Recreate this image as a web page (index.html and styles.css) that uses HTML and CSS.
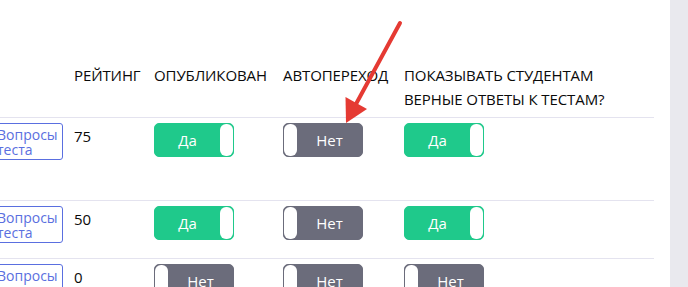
FILE: index.html
```
<!DOCTYPE html>
<html lang="ru">
<head>
<meta charset="utf-8">
<link rel="stylesheet" href="styles.css">
</head>
<body>
<div class="page">
  <main class="main">
    <div class="table">
      <div class="row head">
        <div class="cell"></div>
        <div class="cell">РЕЙТИНГ</div>
        <div class="cell">ОПУБЛИКОВАН</div>
        <div class="cell">АВТОПЕРЕХОД</div>
        <div class="cell">ПОКАЗЫВАТЬ СТУДЕНТАМ<br>ВЕРНЫЕ ОТВЕТЫ К ТЕСТАМ?</div>
      </div>
      <div class="row r1">
        <div class="cell"><button class="qbtn">Вопросы<br>теста</button></div>
        <div class="cell num">75</div>
        <div class="cell"><span class="tgl on">Да</span></div>
        <div class="cell"><span class="tgl off">Нет</span></div>
        <div class="cell"><span class="tgl on">Да</span></div>
      </div>
      <div class="row r2">
        <div class="cell"><button class="qbtn">Вопросы<br>теста</button></div>
        <div class="cell num">50</div>
        <div class="cell"><span class="tgl on">Да</span></div>
        <div class="cell"><span class="tgl off">Нет</span></div>
        <div class="cell"><span class="tgl on">Да</span></div>
      </div>
      <div class="row r3">
        <div class="cell"><button class="qbtn">Вопросы<br>теста</button></div>
        <div class="cell num">0</div>
        <div class="cell"><span class="tgl off">Нет</span></div>
        <div class="cell"><span class="tgl off">Нет</span></div>
        <div class="cell"><span class="tgl off">Нет</span></div>
      </div>
    </div>
    <svg class="arrow" width="688" height="287" viewBox="0 0 688 287">
      <line x1="400" y1="23" x2="356" y2="104" stroke="#e53a33" stroke-width="4" stroke-linecap="round"/>
      <polygon points="346,123 345.5,97 367,109" fill="#e53a33"/>
    </svg>
  </main>
  <aside class="side"></aside>
</div>
</body>
</html>
```
FILE: styles.css
```
html, body {
  margin: 0;
  padding: 0;
  background: #fff;
}
body {
  font-family: "Open Sans", "Noto Sans", sans-serif;
  color: #0a0a0a;
  width: 688px;
  height: 287px;
  overflow: hidden;
}
.page {
  display: flex;
  height: 287px;
}
.main {
  position: relative;
  width: 670px;
  overflow: hidden;
}
.side {
  flex: 1;
  background: #e9e9ee;
}
.table {
  margin-left: -10px;
  width: 664px;
}
.row {
  display: grid;
  grid-template-columns: 84px 80px 129px 121px 250px;
  box-sizing: border-box;
}
.row.head {
  height: 117px;
  padding-top: 63px;
  font-size: 15px;
  line-height: 24px;
  letter-spacing: -0.1px;
}
.row.r1, .row.r2, .row.r3 {
  border-top: 1px solid #e4e3ef;
  padding-top: 5px;
}
.row.r1 { height: 83px; }
.row.r2 { height: 58px; }
.row.r3 { height: 40px; }
.cell.num {
  font-size: 15px;
  line-height: 20px;
  padding-top: 3px;
}
.qbtn {
  display: block;
  width: 73px;
  height: 37px;
  box-sizing: border-box;
  padding: 3px 6px;
  margin: 0;
  border: 1px solid #5a6fe0;
  border-radius: 3px;
  background: #fff;
  color: #5a6fe0;
  font-family: inherit;
  font-size: 14px;
  line-height: 15px;
  text-align: left;
  white-space: nowrap;
}
.tgl {
  display: flex;
  align-items: center;
  justify-content: center;
  width: 80px;
  height: 34px;
  box-sizing: border-box;
  border-radius: 5px;
  color: #fff;
  font-size: 15px;
  position: relative;
}
.tgl.on {
  background: #1fc98b;
  border: 1px solid #1fc98b;
  padding-right: 13px;
}
.tgl.off {
  background: #6b6c7b;
  border: 1px solid #6b6c7b;
  padding-left: 13px;
}
.tgl::after {
  content: "";
  position: absolute;
  top: 0;
  bottom: 0;
  width: 13px;
  background: #fff;
  border-radius: 6px;
}
.tgl.on::after { right: 0; }
.tgl.off::after { left: 0; }
.arrow {
  position: absolute;
  left: 0;
  top: 0;
  pointer-events: none;
}
```
